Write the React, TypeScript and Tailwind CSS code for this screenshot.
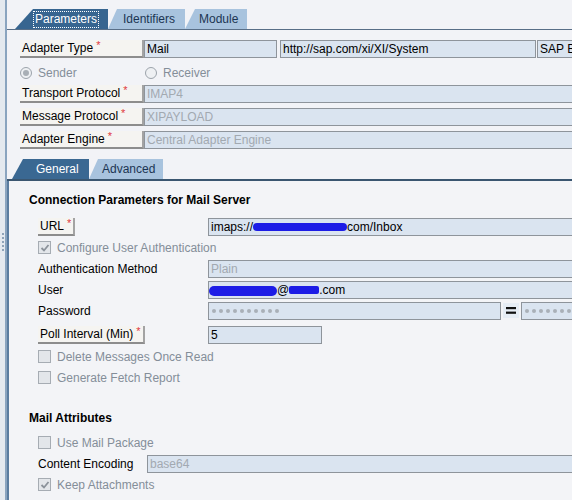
import React from 'react';

// SAP PI communication channel editor (mail adapter)

const DISABLED_TEXT = 'text-[#848e99]';

function Req() {
  return <span className="ml-[3px] -mt-[5px] text-[11px] leading-none text-[#e0393e]">*</span>;
}

function LabelBtn({ text }: { text: string }) {
  return (
    <div className="flex h-[18px] shrink-0 items-center whitespace-nowrap border-b-2 border-r-2 border-b-[#8d8d8d] border-r-[#a3a3a3] bg-[#f5f4f1] pl-[2px] pr-[2px] text-black">
      <span>{text}</span>
      <Req />
    </div>
  );
}

function Field({
  children,
  className = '',
  muted = false,
}: {
  children?: React.ReactNode;
  className?: string;
  muted?: boolean;
}) {
  return (
    <div
      className={`flex h-[18px] min-w-0 items-center overflow-hidden whitespace-nowrap border border-[#8e949b] bg-[#dae4f0] px-[2px] ${
        muted ? 'text-[#a2a9b1]' : 'text-black'
      } ${className}`}
    >
      {children}
    </div>
  );
}

function Dots({ count }: { count: number }) {
  return (
    <div className="flex items-center gap-[3px] pl-[1px]">
      {Array.from({ length: count }).map((_, i) => (
        <span key={i} className="h-[4px] w-[4px] rounded-full bg-[#a9b0b8]" />
      ))}
    </div>
  );
}

function Check({ checked, label }: { checked?: boolean; label: string }) {
  return (
    <div className="flex h-[21px] items-center">
      <div className="flex h-[13px] w-[13px] items-center justify-center border border-[#a6acb3] bg-[#e3e6ea]">
        {checked && (
          <svg width="10" height="10" viewBox="0 0 10 10">
            <path d="M1.5 5 L4 7.5 L8.5 2" fill="none" stroke="#8b929a" strokeWidth="1.8" />
          </svg>
        )}
      </div>
      <span className={`ml-[6px] whitespace-nowrap ${DISABLED_TEXT}`}>{label}</span>
    </div>
  );
}

function Radio({ on, label }: { on?: boolean; label: string }) {
  return (
    <div className="flex items-center">
      <div className="flex h-[12px] w-[12px] items-center justify-center rounded-full border border-[#9ca3ab] bg-[#eef0f3]">
        {on && <span className="h-[6px] w-[6px] rounded-full bg-[#a9afb6]" />}
      </div>
      <span className={`ml-[6px] ${DISABLED_TEXT}`}>{label}</span>
    </div>
  );
}

export default function App() {
  return (
    <div className="flex h-[500px] w-[572px] overflow-hidden bg-[#f2f3f7] font-['Liberation_Sans',Arial,sans-serif] text-[12px] leading-none">
      {/* splitter gutter */}
      <div className="flex w-[5px] shrink-0 flex-col items-center bg-[#e4e9ef]">
        <div className="mt-[233px] h-[18px] w-[2px] border-l-2 border-dotted border-[#8fa3b8]" />
      </div>

      <div className="flex min-w-0 flex-1 flex-col border-l-2 border-[#8aa4bf]">
        {/* top tabs */}
        <div className="mt-[9px] flex h-[20px] pl-[8px]">
          <div className="flex w-[93px] items-center bg-[#376590] pl-[18px] [clip-path:polygon(0_100%,18px_0,100%_0,100%_100%)]">
            <span className="flex h-[17px] items-center border border-dotted border-white px-[1px] text-white">
              Parameters
            </span>
          </div>
          <div className="flex w-[77px] items-center bg-[#a8c3de] pl-[15px] text-[#1c3553] [clip-path:polygon(0_100%,9px_0,100%_0,100%_100%)]">
            Identifiers
          </div>
          <div className="flex w-[62px] items-center bg-[#a8c3de] pl-[14px] text-[#1c3553] [clip-path:polygon(0_100%,10px_0,100%_0,100%_100%)]">
            Module
          </div>
        </div>
        <div className="h-px w-full bg-[#586e87]" />

        {/* header form */}
        <div className="flex flex-col pl-[13px] pt-[10px]">
          <div className="flex h-[18px] w-[600px]">
            <div className="w-[124px] shrink-0">
              <LabelBtn text="Adapter Type" />
            </div>
            <Field className="w-[133px] shrink-0">Mail</Field>
            <Field className="ml-[3px] w-[256px] shrink-0">http://sap.com/xi/XI/System</Field>
            <Field className="ml-[1px] flex-1">SAP Basis 7.50</Field>
          </div>
          <div className="mt-[5px] flex h-[20px] items-center">
            <div className="w-[124px]">
              <Radio on label="Sender" />
            </div>
            <div className="pl-[1px]">
              <Radio label="Receiver" />
            </div>
          </div>
          <div className="mt-[2px] flex h-[18px]">
            <div className="w-[124px] shrink-0">
              <LabelBtn text="Transport Protocol" />
            </div>
            <Field muted className="flex-1 border-r-0">IMAP4</Field>
          </div>
          <div className="mt-[5px] flex h-[18px]">
            <div className="w-[124px] shrink-0">
              <LabelBtn text="Message Protocol" />
            </div>
            <Field muted className="flex-1 border-r-0">XIPAYLOAD</Field>
          </div>
          <div className="mt-[5px] flex h-[18px]">
            <div className="w-[124px] shrink-0">
              <LabelBtn text="Adapter Engine" />
            </div>
            <Field muted className="flex-1 border-r-0">Central Adapter Engine</Field>
          </div>
        </div>

        {/* sub tabs */}
        <div className="mt-[10px] flex h-[20px] pl-[5px]">
          <div className="flex w-[77px] items-center bg-[#3a6892] pl-[24px] text-white [clip-path:polygon(0_100%,11px_0,100%_0,100%_100%)]">
            General
          </div>
          <div className="flex w-[74px] items-center bg-[#a8c3de] pl-[13px] text-[#1c3553] [clip-path:polygon(0_100%,9px_0,100%_0,100%_100%)]">
            Advanced
          </div>
        </div>
        <div className="h-[2px] w-full bg-[#3a5670]" />

        {/* general panel */}
        <div className="flex flex-1 flex-col border-l-2 border-[#5a7c9f] bg-[#f3f4f7] pl-[20px]">
          <div className="mt-[12px] flex h-[14px] items-center whitespace-nowrap font-bold text-black">
            Connection Parameters for Mail Server
          </div>

          <div className="flex flex-col pl-[9px]">
            <div className="mt-[9px] flex h-[21px] items-center">
              <div className="w-[170px] shrink-0">
                <div className="inline-flex">
                  <LabelBtn text="URL" />
                </div>
              </div>
              <Field className="flex-1 border-r-0">
                <span>imaps://</span>
                <span className="h-[8px] w-[94px] rounded-full bg-[#1c1ce6]" />
                <span>com/Inbox</span>
              </Field>
            </div>

            <Check checked label="Configure User Authentication" />

            <div className="flex h-[21px] items-center">
              <div className="w-[170px] shrink-0 whitespace-nowrap text-black">Authentication Method</div>
              <Field muted className="flex-1 border-r-0">Plain</Field>
            </div>

            <div className="flex h-[21px] items-center">
              <div className="w-[170px] shrink-0 text-black">User</div>
              <Field className="flex-1 border-r-0 pl-0">
                <span className="mt-[3px] h-[10px] w-[68px] rounded-[5px] bg-[#1c1ce6]" />
                <span>@</span>
                <span className="h-[8px] w-[30px] rounded-[2px] bg-[#1c1ce6]" />
                <span>.com</span>
              </Field>
            </div>

            <div className="flex h-[21px] items-center">
              <div className="w-[170px] shrink-0 text-black">Password</div>
              <Field className="w-[293px] shrink-0">
                <Dots count={10} />
              </Field>
              <div className="ml-[2px] flex h-[15px] w-[16px] shrink-0 items-center justify-center bg-[#e6edf5]">
                <svg width="10" height="7" viewBox="0 0 10 7">
                  <rect x="0" y="0" width="10" height="2.2" fill="#111" />
                  <rect x="0" y="4.6" width="10" height="2.2" fill="#111" />
                </svg>
              </div>
              <Field className="ml-[2px] flex-1 border-r-0">
                <Dots count={7} />
              </Field>
            </div>

            <div className="mt-[3px] flex h-[21px] items-center">
              <div className="w-[170px] shrink-0">
                <div className="inline-flex">
                  <LabelBtn text="Poll Interval (Min)" />
                </div>
              </div>
              <Field className="w-[114px] shrink-0">5</Field>
            </div>

            <div className="mt-[1px]">
              <Check label="Delete Messages Once Read" />
            </div>
            <Check label="Generate Fetch Report" />
          </div>

          <div className="mt-[23px] flex h-[14px] items-center font-bold text-black">Mail Attributes</div>

          <div className="mt-[7px] flex flex-col pl-[9px]">
            <Check label="Use Mail Package" />
            <div className="flex h-[21px] items-center">
              <div className="w-[109px] shrink-0 whitespace-nowrap text-black">Content Encoding</div>
              <Field muted className="flex-1 border-r-0">base64</Field>
            </div>
            <Check checked label="Keep Attachments" />
          </div>
        </div>
      </div>
    </div>
  );
}
